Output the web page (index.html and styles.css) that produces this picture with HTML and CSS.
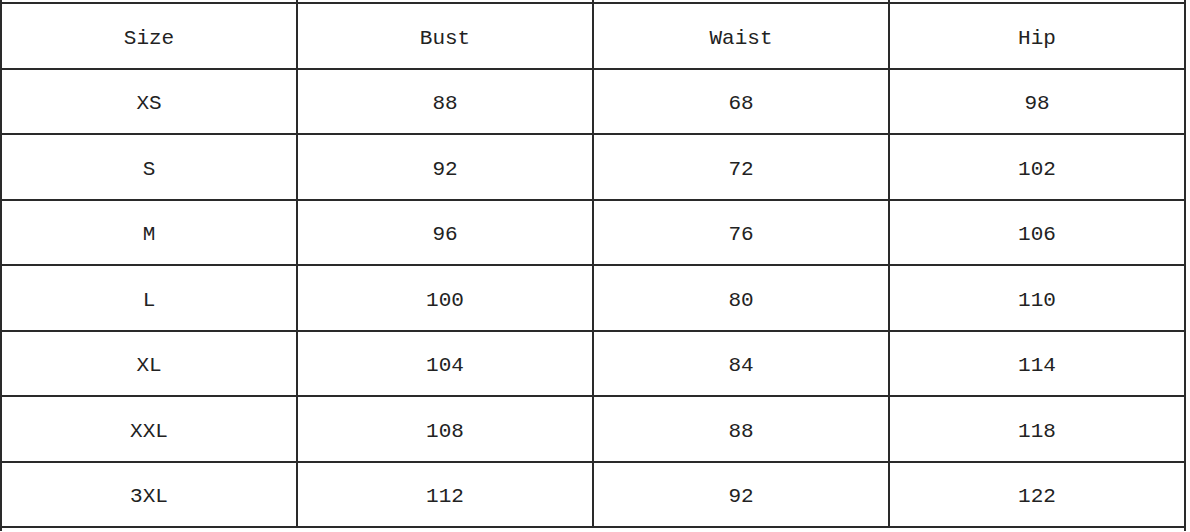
FILE: index.html
```html
<!DOCTYPE html>
<html>
<head>
<meta charset="utf-8">
<link rel="stylesheet" href="styles.css">
</head>
<body>
<table class="chart">
  <tr class="cut"><td></td><td></td><td></td><td></td></tr>
  <tr class="row"><td>Size</td><td>Bust</td><td>Waist</td><td>Hip</td></tr>
  <tr class="row"><td>XS</td><td>88</td><td>68</td><td>98</td></tr>
  <tr class="row"><td>S</td><td>92</td><td>72</td><td>102</td></tr>
  <tr class="row"><td>M</td><td>96</td><td>76</td><td>106</td></tr>
  <tr class="row"><td>L</td><td>100</td><td>80</td><td>110</td></tr>
  <tr class="row"><td>XL</td><td>104</td><td>84</td><td>114</td></tr>
  <tr class="row"><td>XXL</td><td>108</td><td>88</td><td>118</td></tr>
  <tr class="row"><td>3XL</td><td>112</td><td>92</td><td>122</td></tr>
  <tr class="foot"><td colspan="4"></td></tr>
</table>
</body>
</html>
```

FILE: styles.css
```css
html, body {
  margin: 0;
  padding: 0;
  background: #ffffff;
  overflow: hidden;
}
.chart {
  border-collapse: collapse;
  table-layout: fixed;
  width: 1186px;
  font-family: "Liberation Mono", "DejaVu Sans Mono", monospace;
  font-size: 21px;
  color: #222222;
}
.chart td {
  border: 2px solid #2a2a2a;
  text-align: center;
  vertical-align: middle;
  padding: 5px 0 0 0;
}
.chart .cut td {
  border-top: none;
  height: 2px;
  padding: 0;
}
.chart .row td {
  height: 65.5px;
  box-sizing: border-box;
}
.chart .foot td {
  border-bottom: none;
  height: 3px;
  padding: 0;
}
```
